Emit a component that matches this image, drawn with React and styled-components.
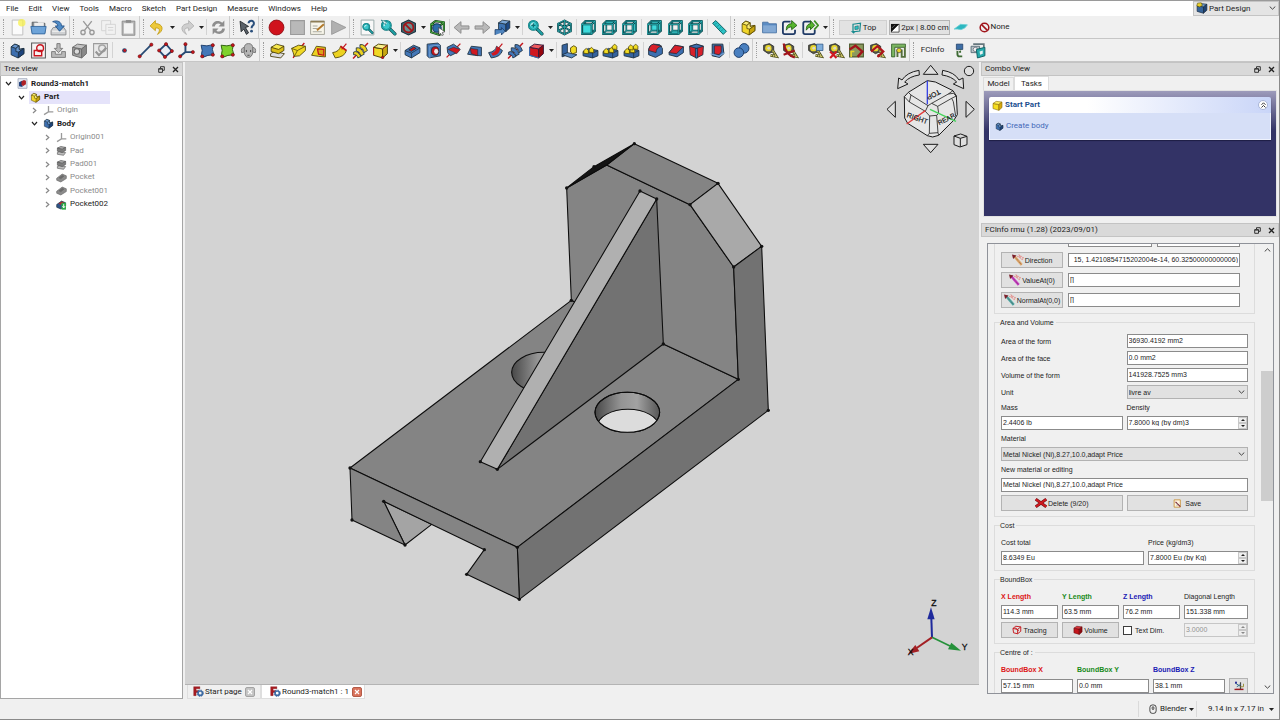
import React, { useLayoutEffect, useRef } from "react";
import styled, { createGlobalStyle, css } from "styled-components";

const ui = 'Roboto, "Noto Sans", sans-serif';
const form = '"Liberation Sans", Arial, sans-serif';

const Global = createGlobalStyle`
  *, *::before, *::after { box-sizing: border-box; }
  body { margin: 0; background: #f0f0f0; color: #1c1c1c; font: 8px/12px ${ui}; }
  button, input, select { font: inherit; color: inherit; margin: 0; padding: 0; border-radius: 0; }
  svg { display: block; flex: none; }
`;

/* ---------- drawing helpers ---------- */

const Glyph = ({ size = 17, children, box = 16 }) => (
  <svg width={size} height={size} viewBox={`0 0 ${box} ${box}`} aria-hidden="true">{children}</svg>
);

const D = "#1c2f3e";

const Cube = ({ f, t, s, line = D }) => (
  <g stroke={line} strokeWidth=".9" strokeLinejoin="round">
    <path d="M1.5 5 10 6.5V15L1.5 12.5Z" fill={f} />
    <path d="M1.5 5 6 2 14.5 3 10 6.5Z" fill={t} />
    <path d="M10 6.5 14.5 3V11L10 15Z" fill={s} />
  </g>
);

const Piped = ({ d, c, w = 1.4, k = "#0b3d42" }) => (
  <g fill="none" strokeLinejoin="round" strokeLinecap="round">
    <path d={d} stroke={k} strokeWidth={w + 1.1} />
    <path d={d} stroke={c} strokeWidth={w} />
  </g>
);

const faces = {
  front: "M2 5H11V14H2Z",
  top: "M2 5 5 2H14L11 5Z",
  right: "M11 5 14 2V11L11 14Z",
  rear: "M5 2H14V11H5Z",
  bottom: "M2 14 5 11H14L11 14Z",
  left: "M2 5 5 2V11L2 14Z",
};

const ViewCube = ({ face }) => {
  const back = face === "rear" || face === "bottom" || face === "left";
  return (
    <g>
      {back && <path d={faces[face]} fill="#3ddadc" />}
      <Piped w={0.5} c="#1f9ea2" k="#1b6a6e" d="M5 2V11H14M5 11 2 14" />
      {!back && <path d={faces[face]} fill="#3ddadc" />}
      <Piped w={0.8} c="#2bb9bd" d="M2 5H11V14H2ZM2 5 5 2H14L11 5M14 2V11L11 14" />
    </g>
  );
};

const Dot = ({ x, y, r = 1.5 }) => <circle cx={x} cy={y} r={r} fill="#c4161c" stroke="#5c0a0d" strokeWidth=".5" />;

const Lens = () => (
  <g>
    <Piped d="M9.5 9.5 14 14" c="#1f9fa3" w={2} />
    <circle cx="6" cy="6" r="4.2" fill="#3cc7cb" stroke="#0e6f74" strokeWidth="1.8" />
    <circle cx="6" cy="6" r="4.2" fill="none" stroke="#26b8bc" strokeWidth=".8" />
    <path d="M3.8 6.5Q4 4 6.5 3.8" fill="none" stroke="#d8f6f7" strokeWidth="1.2" />
  </g>
);

const Body = ({ a = "#3d6fb0", b = "#6a97cf", c = "#1d437c", line = D }) => (
  <g stroke={line} strokeWidth=".8" strokeLinejoin="round">
    <path d="M2 4.5 5.5 2 9.5 3.5V7L14 6V11L8.5 15 2 12Z" fill={a} />
    <path d="M2 4.5 5.5 2 9.5 3.5 6.5 6Z" fill={b} />
    <path d="M6.5 6 9.5 3.5V7L14 6 9 9.5 6.5 9Z" fill={b} />
    <path d="M9 9.5 14 6V11L8.5 15Z" fill={c} />
  </g>
);

const Bolt = ({ c, d }) => (
  <g>
    <path d="M1 15.5 15 1" stroke={d} strokeWidth="1.4" />
    <g fill={c} stroke={D} strokeWidth=".8" strokeLinejoin="round">
      <path d="M1.5 9.5Q5 7.5 8.5 13.5L5.5 15Q5 11.5 1.5 12Z" />
      <path d="M4 5.5Q9 4.500 11.5 11.5L8.500 13Q7 8.500 4 8.500Z" />
      <path d="M7.5 2.5Q12 1.5 14.5 8L11.5 10Q10.5 5.5 7.5 5.5Z" />
    </g>
  </g>
);

const Tape = ({ children }) => (
  <g>
    <path d="M1.5 3 7 1.5 11 4V9L6 11 1.5 8Z" fill="#55564a" stroke="#24251f" strokeWidth=".7" />
    <circle cx="6" cy="5.8" r="3" fill="#e8d52a" />
    <circle cx="6.4" cy="5.8" r="1.4" fill="#d9d9c6" />
    <path d="M10 8 13.5 13.5 8 12.5" fill="none" stroke="#4f501c" strokeWidth="2.6" />
    <path d="M10 8 13.5 13.5 8 12.5" fill="none" stroke="#cfc76a" strokeWidth="1.3" strokeDasharray="1.4 .7" />
    {children}
  </g>
);

const Pattern = ({ n }) => (
  <g>
    <path d="M1 9 6 6 15 8V13L10 15 1 13Z" fill="#35639f" stroke={D} strokeWidth=".8" />
    <path d="M1 9 10 10.5V15M10 10.5 15 8" fill="none" stroke={D} strokeWidth=".7" />
    {[[9, 7], [4, 8], [12, 4], [7.5, 4.5]].slice(0, n).map(([x, y]) => (
      <path key={x} d={`M${x - 2.3} ${y}V${y + 2.6}L${x + 2} ${y + 3}V${y}L${x} ${y - 2}Z`} fill="#f2dc23" stroke="#4b4106" strokeWidth=".7" />
    ))}
  </g>
);

const icons = {
  newDoc: <g><path d="M3 1H13V15H3Z" fill="#fbfbfb" stroke="#b9b9b9" strokeWidth=".8" /><circle cx="12" cy="3.5" r="3.5" fill="#f7f04a" opacity=".75" /></g>,
  open: <g><path d="M2 13V3H7L8 4H14V13Z" fill="#8a8f94" stroke="#4d5358" strokeWidth=".7" /><path d="M4 3.5H13V9H4Z" fill="#eee" /><path d="M.8 7H15.2L14 14H2Z" fill="#6ea4d9" stroke="#2f639b" strokeWidth=".8" /></g>,
  save: <g><path d="M3 8 1 11V15H15V11L13 8Z" fill="#cfd1d3" stroke="#84878a" strokeWidth=".8" /><path d="M2 11.5H14" stroke="#f5f5f5" /><path d="M2.5 2.5C7 .5 11 3 10.8 6.5H13.5L9 11.5 5 6.5H7.5C7 4.5 5 3 2.5 2.5Z" fill="#4f8bc6" stroke="#1f4e86" strokeWidth=".8" /></g>,
  cut: <g fill="none" stroke="#9a9a9a" strokeWidth="1.3"><path d="M4 2 11 11M12 2 5 11" /><circle cx="3.8" cy="12.6" r="2" /><circle cx="12.2" cy="12.6" r="2" /></g>,
  copy: <g fill="#f1f1f1" stroke="#d0d0d0" strokeWidth=".8"><path d="M1.5 1.5H10V11H1.5Z" /><path d="M5.5 5H14.5V14.5H5.5Z" /><path d="M7.5 8H12.5M7.5 10.5H12.5" /></g>,
  paste: <g><path d="M2 2H14V15.3H2Z" fill="#b8b8b8" stroke="#868686" strokeWidth=".8" /><path d="M3.7 4H12.3V13.7H3.7Z" fill="#f3f3f3" /><path d="M5.5 1H10.5V3.6H5.5Z" fill="#8d8d8d" /></g>,
  undo: <path d="M6 1.5 1 6.5 6 11V8.5C10 8 11 10.5 8 14.5 14.5 11 13.5 4.5 6 4.3Z" fill="#edc93a" stroke="#c29c14" strokeWidth=".8" />,
  redo: <path d="M10 1.5 15 6.5 10 11V8.5C6 8 5 10.5 8 14.5 1.5 11 2.5 4.5 10 4.3Z" fill="#cfcfcf" stroke="#b0b0b0" strokeWidth=".8" />,
  refresh: <g fill="#8e8e8e"><path d="M2 7C2 2 8 .5 11.5 3.5L13.5 1.5V7H8L10 5C7.5 3.2 5 4.5 4.5 7Z" /><path d="M14 9C14 14 8 15.5 4.5 12.5L2.5 14.5V9H8L6 11C8.5 12.8 11 11.5 11.5 9Z" /></g>,
  whats: <g><path d="M1 2 9 7 6 8 9 13 7 14.5 4.5 9.5 2 12Z" fill="#5a6169" stroke="#1e2226" strokeWidth=".8" /><path d="M9 4C9 .8 14.5 1 14 4.5 13.8 6.3 11.8 6.2 11.8 8.6" fill="none" stroke="#2a4f7c" strokeWidth="1.9" /><circle cx="11.8" cy="11.5" r="1.3" fill="#2a4f7c" /></g>,
  record: <circle cx="8" cy="8" r="7" fill="#d0121c" stroke="#8b0b12" strokeWidth=".8" />,
  stop: <path d="M1.5 1.5H14.5V14.5H1.5Z" fill="#b9b9b9" stroke="#9a9a9a" />,
  macro: <g><path d="M1.5 2H14.5V14.5H1.5Z" fill="#f7f5ea" stroke="#9a9a8f" strokeWidth=".8" /><path d="M1.5 2.5H14.5" stroke="#8d7d56" strokeWidth="1.6" /><path d="M3.5 6.5H8M3.5 9H8M3.5 12H12" stroke="#a9a9a0" /><path d="M14 5 7.5 10.5" stroke="#b1782a" strokeWidth="1.8" /></g>,
  play: <path d="M1.5 1.5 15 8 1.5 14.5Z" fill="#b0b0b0" stroke="#979797" strokeWidth=".8" />,
  fitAll: <g><path d="M2 1H14V15H2Z" fill="#f8f8f8" stroke="#9aa" strokeWidth=".9" /><g transform="translate(2.5 3) scale(.72)"><Lens /></g></g>,
  fitSel: <g><Lens /><path d="M1 1 6 2.5 5 5.5Z" fill="#e7f7f7" stroke="#0e6f74" strokeWidth=".6" /></g>,
  drawStyle: <g><path d="M8 1 14.5 4V12L8 15 1.5 12V4Z" fill="#3c6b70" stroke={D} /><circle cx="8" cy="8" r="4.6" fill="#6c8f90" stroke="#a01318" strokeWidth="1.7" /><path d="M4.8 4.8 11.2 11.2" stroke="#a01318" strokeWidth="1.7" /></g>,
  boxSel: <g><Piped w={0.9} c="#4fb547" k="#123b16" d="M2 5 10 6.5V15L2 12.5ZM2 5 6 2 14 3 10 6.5M14 3V11" /><circle cx="7.5" cy="8.5" r="4" fill="#2c6da8" stroke="#14365c" /><path d="M9 8 15 12 12.5 12.7 13.5 15 12 15.5 11 13.5 9.5 15Z" fill="#fff" stroke="#333" strokeWidth=".6" /></g>,
  back: <path d="M1 8 7.5 2.5V6.5H15V9.5H7.5V13.5Z" fill="#b9b9b9" stroke="#8c8c8c" strokeWidth=".9" />,
  forward: <path d="M15 8 8.5 2.5V6.5H1V9.5H8.5V13.5Z" fill="#b9b9b9" stroke="#8c8c8c" strokeWidth=".9" />,
  link: <g><g transform="translate(3 -.5) scale(.82)"><Cube f="#3e74b3" t="#7aa6d6" s="#1e4a86" /></g><path d="M1 15V10H7V8L10.5 11.5 7 15V13" fill="#4f86c0" stroke="#1b3c69" strokeWidth=".8" /></g>,
  zoomIn: <g><Lens /><path d="M6 4V8M4 6H8" stroke="#0e6f74" strokeWidth="1.1" /></g>,
  axo: <Piped w={0.8} c="#2aa9ad" d="M8 1.5 14 4.5V11.5L8 14.5 2 11.5V4.5ZM2 4.5 8 7.5 14 4.5M8 7.5V14.5M8 1.5V7.5M2 11.5 8 7.5 14 11.5" />,
  vFront: <ViewCube face="front" />, vTop: <ViewCube face="top" />, vRight: <ViewCube face="right" />,
  vRear: <ViewCube face="rear" />, vBottom: <ViewCube face="bottom" />, vLeft: <ViewCube face="left" />,
  ruler: <g><path d="M1.5 4 4.5 1.5 14.5 11.5 11.5 14.5Z" fill="#2cc4c7" stroke="#0e5f63" strokeWidth=".9" /><path d="M5 4 4 5M7 6 6 7M9 8 8 9M11 10 10 11" stroke="#0e5f63" strokeWidth=".7" /></g>,
  part: <Body a="#f1d62a" b="#f9ec72" c="#c7a50e" line="#5a4a06" />,
  folder: <g><path d="M1.5 13V3H6.5L7.5 4.5H14.5V13Z" fill="#5b8cc4" stroke="#466f9f" strokeWidth=".8" /><path d="M2 6H14V12.5H2Z" fill="#83a9d4" /></g>,
  linkMake: <g><path d="M9 2.5H3.5Q1.8 2.5 1.8 4.2V12.5Q1.8 14.2 3.5 14.2H11.5Q13.2 14.2 13.2 12.5V10" fill="none" stroke="#1f3a66" strokeWidth="1.7" /><path d="M5 10.5C5 6 7 4.5 10 4.5V1.5L15 6 10 10V7.5C8 7.5 6.5 8 5 10.5Z" fill="#56b52d" stroke="#1e5c10" strokeWidth=".8" /></g>,
  linkGroup: <g><path d="M8 2.5H2.8Q1.2 2.5 1.2 4.2V12.5Q1.2 14.2 2.8 14.2H10.5Q12 14.2 12 12.5V10" fill="none" stroke="#1f3a66" strokeWidth="1.7" /><path d="M4 10.5C4 6 6 4.5 8 4.5V1.5L12 6 8 10V7.5Q6 7.5 4 10.5Z" fill="#56b52d" stroke="#1e5c10" strokeWidth=".8" /><path d="M11.5 1.5 15.3 6 11.5 10" fill="none" stroke="#3d8f22" strokeWidth="1.6" /></g>,
  plane: <path d="M2 9.5 8 5 14.5 5.5 12 8.5 8.5 10 5 9.5Z" fill="#2db7c0" stroke="#6fd0d6" strokeWidth=".8" />,
  body: <Body />,
  sketch: <g><path d="M1.5 1H14.5V15H1.5Z" fill="#f6f2f2" stroke="#5a5a5a" /><path d="M4 8H11V13H4Z" fill="none" stroke="#c8141d" strokeWidth="1.3" /><circle cx="9.5" cy="5.8" r="3.2" fill="none" stroke="#c8141d" strokeWidth="1.3" /></g>,
  attach: <g fill="#b9b9b9" stroke="#7d7d7d" strokeWidth=".9"><path d="M1.5 9H5V11.5H11V9H14.5V14.5H1.5Z" /><path d="M6.5 1.5H9.5V6H12L8 10 4 6H6.5Z" /></g>,
  validate: <g><Cube f="#a2a2a2" t="#c4c4c4" s="#8a8a8a" line="#6c6c6c" /><circle cx="5.5" cy="9" r="2.6" fill="#dcdcdc" stroke="#6b6b6b" /></g>,
  check: <g><path d="M1.5 1.5H14.5V14.5H1.5Z" fill="#e9e9e9" stroke="#9c9c9c" /><circle cx="9.5" cy="6" r="3.2" fill="none" stroke="#a6a6a6" strokeWidth="1.3" /><path d="M3.5 9 6.5 12.5 13.5 5.5" fill="none" stroke="#969696" strokeWidth="2" /></g>,
  point: <g><circle cx="8" cy="8" r="2.2" fill="#28456f" /><circle cx="8.3" cy="8" r="1.3" fill="#c4161c" /></g>,
  line: <g><path d="M2.5 13.5 13.5 2.5" stroke="#274a73" strokeWidth="1.7" /><Dot x={2.5} y={13.5} /><Dot x={13.5} y={2.5} /></g>,
  datumPlane: <g><path d="M8.5 2 14 8.5 7.5 14 2 8Z" fill="#e9eef5" stroke="#274a73" strokeWidth="1.7" /><Dot x={8.5} y={2} /><Dot x={14} y={8.5} /><Dot x={7.5} y={14} /><Dot x={2} y={8} /></g>,
  cs: <g><path d="M7 2V9.5L2 13.5M7 9.5H14" fill="none" stroke="#274a73" strokeWidth="1.8" /><Dot x={7} y={2} /><Dot x={2} y={13.5} /><Dot x={14} y={9.5} /></g>,
  binder: <g><path d="M2 3Q7 4.5 13.5 2.5 11.5 7 14 12 8 12 3.5 14.5 1.5 12 3 8Z" fill="#4478b8" stroke="#1b3c69" strokeWidth=".9" /><Dot x={13} y={3} /><Dot x={13} y={12} /><Dot x={3} y={13.5} /></g>,
  subBinder: <g><path d="M2 3Q7 4.5 13.5 2.5 11.5 7 14 12 8 12 3.5 14.5 1.5 12 3 8Z" fill="#7fd22e" stroke="#2b5d0c" strokeWidth=".9" /><Dot x={13} y={3} /><Dot x={13} y={12} /><Dot x={3} y={13.5} /></g>,
  clone: <g fill="#b5b5b5" stroke="#777" strokeWidth=".9"><path d="M4 6Q4 1.5 8 1.5T12 6V10Q11 14.5 8 14.5T4 10Z" /><path d="M4 5Q.5 5.5 1.5 10L4 9.5ZM12 5Q15.5 5.5 14.5 10L12 9.5Z" /><path d="M6 7.5V9.5M10 7.5V9.5M7 12.5H9" stroke="#444" /></g>,
  pad: <g stroke="#453a06" strokeWidth=".8"><path d="M1.5 11 5 9 14.5 11 11 15 1.5 13.5Z" fill="#dcdce0" /><path d="M2 5V9L9 11 14 8V4Z" fill="#dcbf17" /><path d="M2 5 7 2 14 4 9 7Z" fill="#f8e94e" /></g>,
  revolve: <g><path d="M3 15 5 11M11 4 13.5 1" stroke="#c4161c" strokeWidth="1.3" /><path d="M1.5 6 8 3 14.5 4V8L9 13 4 13.5 3 10Z" fill="#f0d824" stroke="#4b4106" strokeWidth=".8" /><path d="M1.5 6 7 8 4 13.5M7 8 14.5 4" fill="none" stroke="#4b4106" strokeWidth=".7" /></g>,
  loft: <g><path d="M1.5 12.5 6 4 14.5 5V14L8 13.5Z" fill="#ecd21f" stroke="#4b4106" strokeWidth=".8" /><path d="M7 6.5 13 7V12.5L8 11.5Z" fill="#d9a417" stroke="#c4161c" strokeWidth="1.2" /></g>,
  sweep: <g><path d="M1.5 10Q8 9 9 4L14.5 8Q13 14 4 15Z" fill="#ecd21f" stroke="#4b4106" strokeWidth=".8" /><path d="M9 4 14.5 8" stroke="#c4161c" strokeWidth="1.5" /><path d="M10 7 14.5 1.5" stroke="#c4161c" strokeWidth="1.1" /></g>,
  helix: <Bolt c="#ecd21f" d="#c4161c" />,
  addPrim: <g><Cube f="#f0d824" t="#faf08a" s="#c9a812" line="#4b4106" /><path d="M1.5 5V12.5M10 6.5 14.5 3" stroke="#c4161c" strokeWidth=".8" /><Dot x={10} y={14.5} r={1.2} /></g>,
  pocket: <g><path d="M1 8 9 3 15 5.5V10L7 15 1 12Z" fill="#4478b8" stroke={D} strokeWidth=".8" /><path d="M1 8 7 10.5V15M7 10.5 15 5.5" fill="none" stroke={D} strokeWidth=".7" /><path d="M4.5 7.5 9 4.8 11.5 6 7 8.8Z" fill="#c4161c" stroke={D} strokeWidth=".7" /></g>,
  hole: <g><path d="M2 2 12 1 14.5 3V13L4 15 2 13Z" fill="#4478b8" stroke={D} strokeWidth=".8" /><path d="M4.5 4 14 3M4.5 4V15" stroke="#7aa6d6" strokeWidth=".8" /><ellipse cx="9.5" cy="8.5" rx="3.5" ry="4" fill="#c4161c" stroke={D} strokeWidth=".8" /><ellipse cx="10.5" cy="8.8" rx="1.9" ry="2.5" fill="#e8e8e8" /></g>,
  groove: <g><path d="M1.5 14.5 14.5 1.5" stroke="#c4161c" strokeWidth="1.2" /><path d="M2 5 8 2 13.5 6 11 10 5 13 2.5 10Z" fill="#4478b8" stroke={D} strokeWidth=".8" /><path d="M3 7 8 5 14.5 7 11 11 7 9Z" fill="#d01820" stroke={D} strokeWidth=".5" /></g>,
  subLoft: <g><path d="M1.5 11.5 5 4 14.5 5V13L8 12.5Z" fill="#4478b8" stroke={D} strokeWidth=".8" /><path d="M4 6 11 7V13L5 11Z" fill="#d01820" stroke={D} strokeWidth=".6" /></g>,
  subSweep: <g><path d="M1.5 10Q8 9 9 4L14.5 8Q13 14 4 15Z" fill="#4478b8" stroke={D} strokeWidth=".8" /><path d="M4 10.5Q9 9 9 4L12.5 6.5Q11 12 5.5 13Z" fill="#d01820" /><path d="M10 7 14.5 1.5" stroke="#c4161c" strokeWidth="1.1" /></g>,
  subHelix: <Bolt c="#4478b8" d="#c4161c" />,
  subPrim: <g><Cube f="#d01820" t="#ef5a5f" s="#98070d" line="#3b1a3a" /><path d="M1.5 5V12.5L10 15" fill="none" stroke="#3d6fb0" strokeWidth="1" /></g>,
  mirror: <g><path d="M1 3 6 1.5V12L1 14Z" fill="#35639f" stroke={D} strokeWidth=".8" /><path d="M1 12 6 10 15 12 10 15Z" fill="#5b8cc4" stroke={D} strokeWidth=".8" /><path d="M9 5.5 12 3.5 14.5 5V10L11 11 9 9.5Z" fill="#f2dc23" stroke="#4b4106" strokeWidth=".8" /></g>,
  linPat: <Pattern n={2} />, polPat: <Pattern n={3} />, multi: <Pattern n={4} />,
  fillet: <g><path d="M1.5 7Q2 3 6 2L12 2.5 14.5 6V11L8 14.5 1.5 12Z" fill="#3d6fb0" stroke={D} strokeWidth=".8" /><path d="M1.5 8Q2 3 6 2L14 4Q8.5 5 8.5 10Z" fill="#d8202a" stroke={D} strokeWidth=".7" /></g>,
  chamfer: <g><path d="M1 10 6.5 3 14.5 4.5V10L8.5 14 1 12Z" fill="#3d6fb0" stroke={D} strokeWidth=".8" /><path d="M1 10 6.5 3 14.5 4.5 8 11Z" fill="#d8202a" stroke={D} strokeWidth=".7" /></g>,
  draft: <g><path d="M1.5 4 8 2 14.5 4 14 12 8 15 2 12Z" fill="#d8202a" stroke={D} strokeWidth=".8" /><path d="M1.5 4 8 6 14.5 4 8 2ZM7 6H9V15H7Z" fill="#3d6fb0" stroke={D} strokeWidth=".7" /></g>,
  thick: <g><path d="M3 2H13L14 11 10 14.5 3 13Z" fill="#3d6fb0" stroke={D} strokeWidth=".9" /><path d="M5 3.5H11.5V9.5L9.5 12 5 11Z" fill="#d8202a" stroke={D} strokeWidth=".7" /><path d="M1.5 11 9.5 13.5 14.5 10" fill="none" stroke="#7aa6d6" /></g>,
  boolean: <g fill="#4a80c0" stroke="#1b3c69" strokeWidth=".9"><circle cx="10.5" cy="6" r="4.5" /><circle cx="5.5" cy="10" r="4.5" /></g>,
  mLin: <Tape />,
  mAng: <Tape><path d="M1.5 1.5Q4 13 12 14.5M1.5 12 12 8" fill="none" stroke="#a0141b" strokeWidth="2" /></Tape>,
  mRef: <Tape><path d="M9 2H15V8H9Z" fill="#7faedc" stroke="#2a5484" strokeWidth=".7" /></Tape>,
  mClr: <Tape><path d="M2 9 8 15M8 9 2 15" stroke="#d01820" strokeWidth="2" /></Tape>,
  mTog: <g><path d="M1.5 2H14.5V14H1.5Z" fill="#8b9a5e" stroke="#4c5a2e" /><path d="M3 14V9H6" fill="none" stroke="#e8d52a" strokeWidth="1.5" /><path d="M1.5 7 7 3.5 13.5 9 9 14" fill="none" stroke="#a0141b" strokeWidth="2.2" /></g>,
  mTog3: <Tape><path d="M2 9 8 4 13.5 9 8 14" fill="none" stroke="#b0141b" strokeWidth="2" /></Tape>,
  mDelta: <g><path d="M1.5 2H14.5V5H4.5V14H1.5Z" fill="#7bb661" stroke="#2f5b25" strokeWidth=".8" /><path d="M14 5V14H11V8H7V14" fill="none" stroke="#55703c" strokeWidth="1.8" /><circle cx="8.5" cy="8" r="2.2" fill="#e8d52a" stroke="#333" strokeWidth=".6" /></g>,
  fc1: <g><path d="M6 2H12V7H6Z" fill="#3e6ea5" stroke="#1d3d66" strokeWidth=".7" /><path d="M7 8V11.5Q7 13.5 9 13.5H11.5M9.5 7V10" fill="none" stroke="#3f6b34" strokeWidth="1.8" /><path d="M6 8H10" stroke="#ddd" /></g>,
  fc2: <g><path d="M1 4H9V10H1Z" fill="#b8c2c6" stroke="#4f6570" strokeWidth=".8" /><path d="M3 2H13V5" fill="none" stroke="#66777d" strokeWidth="1.6" /><circle cx="5" cy="7" r="2" fill="#f4f4f4" stroke="#556" strokeWidth=".6" /><path d="M6 7 14 5V13L7 15Z" fill="#26a9ab" stroke="#0e5f63" strokeWidth=".9" /><path d="M9 9 12 8V11L9.5 12Z" fill="#e7f3f3" /></g>,
  none: <g fill="none" stroke="#a0141b" strokeWidth="2.2"><circle cx="8" cy="8" r="6.3" /><path d="M3.8 3.8 12.2 12.2" /></g>,
  topView: <g><path d="M4 3 14 1.5 13 12 4 13Z" fill="none" stroke="#178a8e" strokeWidth="1.6" /><path d="M6.5 6 11 5V9.5L6.5 10Z" fill="#2cc4c7" stroke="#0e5f63" strokeWidth=".8" /><path d="M1 12 7 12.5 5 15.5" fill="#178a8e" /></g>,
  pen: <g><path d="M1.5 1.5H14.5V14.5H1.5Z" fill="#111" /><path d="M14.5 1.5V14.5H1.5Z" fill="#fff" stroke="#111" /><path d="M3 8 8 3" stroke="#888" /></g>,
  wb: <g><Cube f="#356398" t="#6f9bcb" s="#1f4270" line="#1a2a3e" /><path d="M2 1.5 7 1 8.5 4.5 4.5 6.5 1 5Z" fill="#e8cf2a" stroke="#4b4106" strokeWidth=".7" /></g>,
  doc: <g><path d="M1.5 1H14.5V15H1.5Z" fill="#e8ecf5" stroke="#8d97ab" /><path d="M3 6 8 3.5V13L3 12Z" fill="#1b3b78" /><path d="M6.5 5 10 3 13 4V9L9 11.5 6.5 10Z" fill="#b02226" /></g>,
  origin: <path d="M8 1.5V10L1.5 14M8 10H15" fill="none" stroke="#9a9a9a" strokeWidth="1.9" />,
  padGray: <g stroke="#555" strokeWidth=".9"><path d="M2 11 5 9.5 14 11 11 15 2 13.5Z" fill="#bdbdbd" /><path d="M2 4.5V9L9 11 14 8V3.5Z" fill="#7d7d7d" /><path d="M2 4.5 7 2 14 3.5 9 6Z" fill="#a8a8a8" /></g>,
  pocketGray: <g stroke="#666" strokeWidth=".9"><path d="M1 9 9 3 15 5.5V9.5L7 14.5 1 12Z" fill="#8b8b8b" /><path d="M4.5 8.5 9 5 11.5 6 7 9.8Z" fill="#6b6b6b" /></g>,
  pocketTip: <g><path d="M1 8 8 3 14 5.5V10L7 14.5 1 12Z" fill="#2f5488" stroke={D} strokeWidth=".9" /><path d="M3.5 7 8 3.5 12 5 7 8.5Z" fill="#b5262c" /><path d="M8 5.5H14.5V15.5H8Z" fill="#2fa84a" /><path d="M11.2 7.5V12M9.5 10.5 11.2 13 13 10.5" fill="none" stroke="#fff" strokeWidth="1.4" /></g>,
  fcLogo: <g><path d="M1 1H10V4H4.5V6.5H8V9.5H4.5V14H1Z" fill="#a81c22" stroke="#7a1015" strokeWidth=".5" /><circle cx="10.5" cy="10.5" r="3.2" fill="none" stroke="#3c6ba5" strokeWidth="2.4" /><circle cx="10.5" cy="10.5" r="4.7" fill="none" stroke="#2f5b92" strokeWidth="1.2" strokeDasharray="2 1.69" /></g>,
  yellowBox: <Cube f="#f5dd20" t="#fff05a" s="#d9a90c" line="#8a6d05" />,
  mouse: <g fill="none" stroke="#222" strokeWidth="1.3"><rect x="3" y="1.5" width="10" height="13.5" rx="4" /><rect x="6.7" y="4.3" width="2.6" height="4.5" rx="1.3" /></g>,
  del: <g><path d="M1 3 15 13M15 3 1 13" stroke="#6b1013" strokeWidth="4" /><path d="M1 3 15 13M15 3 1 13" stroke="#d01a20" strokeWidth="2.6" /></g>,
  savePen: <g><path d="M2 1.5H13V14.5H2Z" fill="#fff5e2" stroke="#c9933d" strokeWidth="1.6" /><path d="M4.5 5 13 13.5" stroke="#7b2030" strokeWidth="2" /><path d="M5 8H8M5 11H9" stroke="#999" /></g>,
  trace: <g fill="none" stroke="#c4161c" strokeWidth="1.5"><path d="M1.5 5.5 9 7V14L2.5 12.5ZM1.5 5.5 6 2 14 3 9 7M14 3V10L9 14" /><path d="M5 4.5 11 9" /></g>,
  volume: <Cube f="#c4161c" t="#d9363c" s="#8d0b10" line="#6b070b" />,
  axes: <g><path d="M2 12.5H14" stroke="#9b1b20" strokeWidth="2" /><path d="M10 12V3" stroke="#444" strokeWidth="1.6" /><path d="M3 4 9 8M5 9 10 6" stroke="#2c6b8a" strokeWidth="1.3" /><path d="M10 9H14V5" fill="none" stroke="#98903a" strokeWidth="1.3" /><circle cx="4" cy="3.5" r="1.4" fill="#2b2f9a" /></g>,
};

const vec = (c) => (
  <g><path d="M3 3 13 14.5" stroke={c} strokeWidth="3.4" /><path d="M3 3 13 14.5" stroke="#6b3440" strokeWidth=".8" strokeDasharray="1.5 1" /><path d="M0 .5 6 2 1.5 6.5Z" fill="#7b1f2a" /><path d="M7 3 11 5 10 2 15 5 13 8" fill="none" stroke="#e3938f" strokeWidth="1.7" strokeDasharray="2 1" /></g>
);
icons.direction = vec("#e0aa6a");
icons.value = vec("#c43cc4");
icons.normal = vec("#4aa9a4");

const Icon = ({ name, size }) => <Glyph size={size}>{icons[name]}</Glyph>;

/* ---------- frame ---------- */

const Window = styled.div`
  height: 100vh; display: flex; flex-direction: column; overflow: hidden;
  border-right: 1px solid #8a8a8a; border-bottom: 1px solid #8a8a8a;
`;
const MenuBar = styled.header`
  height: 16px; flex: none; display: flex; align-items: stretch; background: #fff; border-top: 1px solid #9a9a9a;
`;
const Menus = styled.nav`display: flex; align-items: center; gap: 10px; padding-left: 6px; flex: 1;`;
const MenuLink = styled.a`color: #1c1c1c; text-decoration: none; font-size: 8px; line-height: 12px; white-space: nowrap;`;
const Workbench = styled.label`
  position: relative; display: flex; width: 86px;
  svg { position: absolute; left: 3px; top: 1px; pointer-events: none; }
  select + svg { left: auto; right: 3px; top: 5px; }
`;
const WorkbenchSelect = styled.select`
  appearance: none; width: 100%; border: 1px solid #c4c4c4; background: #e4e4e4; padding: 0 12px 0 15px; font-size: 8px; outline: none;
`;
const Toolbar = styled.div`
  height: 23px; flex: none; display: flex; align-items: stretch; border-bottom: 1px solid #c6c6c6; background: #f0f0f0;
`;
const Group = styled.div`display: flex; align-items: stretch; flex: none; width: ${(p) => p.$w}px;`;
const Tool = styled.button`
  flex: 1 1 0; min-width: 0; border: 0; background: none; display: flex; align-items: center; justify-content: center;
`;
const Handle = styled.span`
  flex: none; width: ${(p) => p.$w || 8}px; padding: 3px 0 3px 3px; border-left: ${(p) => (p.$first ? 0 : 1)}px solid #cdcdcd;
  &::before { content: ""; display: block; height: 100%; border-left: 1px dotted #9d9d9d; }
`;
const Split = styled.span`flex: none; width: ${(p) => p.$w || 3}px; padding: 3px 1px; &::before { content: ""; display: block; height: 100%; border-left: 1px solid #d3d3d3; }`;
const CaretBtn = styled.button`flex: none; width: 8px; border: 0; background: none; display: flex; align-items: center; justify-content: center;`;
const Caret = () => <svg width="5" height="3" viewBox="0 0 5 3" aria-hidden="true"><path d="M0 0H5L2.5 3Z" fill="#222" /></svg>;
const PlainTool = styled.button`
  flex: none; width: ${(p) => p.$w}px; border: 0; background: none; font-size: 8px; display: flex; align-items: center; justify-content: center; gap: 1px; white-space: nowrap;
`;
const ToggleTool = styled(PlainTool)`
  border: 1px solid ${(p) => (p.$flat ? "#d0d0d0" : "#b4b4b4")}; background: #e2e2e2; margin: 4px 0 3px 2px;
`;

const Work = styled.main`flex: 1; min-height: 0; display: grid; grid-template-columns: 183px minmax(0, 1fr) 298px; column-gap: 2px;`;
const Dock = styled.section`min-height: 0; display: flex; flex-direction: column; flex: ${(p) => (p.$grow ? "1" : "none")};`;
const DockHead = styled.header`
  height: 14px; flex: none; display: flex; align-items: center; gap: 6px; padding: 0 3px; background: #d9d9d9; border: 1px solid #c3c3c3;
`;
const DockTitle = styled.h2`margin: 0; flex: 1; font-size: 8px; line-height: 12px; font-weight: 400;`;
const DockBtn = styled.button`border: 0; background: none; width: 8px; height: 8px; display: grid; place-items: center;`;

const DockBar = ({ title }) => (
  <DockHead>
    <DockTitle>{title}</DockTitle>
    <DockBtn aria-label="Float"><svg width="7" height="7" viewBox="0 0 7 7"><path d="M2.5 2V.7H6.3V4.3H5M.7 2.7H4.5V6.3H.7ZM.7 3H4.5" fill="none" stroke="#222" strokeWidth=".9" /></svg></DockBtn>
    <DockBtn aria-label="Close"><svg width="7" height="7" viewBox="0 0 7 7"><path d="M1 1 6 6M6 1 1 6" stroke="#222" strokeWidth="1.3" /></svg></DockBtn>
  </DockHead>
);

/* ---------- tree ---------- */

const TreeBox = styled.div`flex: 1; background: #fff; border: 1px solid #a5a5a5; border-top: 0;`;
const TreeList = styled.ul`list-style: none; margin: 0; padding: 1px 0 0; height: 135px; display: grid; grid-auto-rows: minmax(0, 1fr);`;
const TreeRow = styled.li`display: flex; align-items: center; padding-left: ${(p) => 2 + p.$depth * 13}px;`;
const Twist = styled.button`border: 0; background: none; width: 10px; height: 10px; display: grid; place-items: center; margin-right: 3px;`;
const TreeName = styled.span`
  display: flex; align-items: center; gap: 3px; height: 13px; padding-left: 1px; font-size: 8px; white-space: nowrap;
  ${(p) => p.$bold && css`font-weight: 700;`}
  ${(p) => p.$dim && css`color: #8b8b8b;`}
  ${(p) => p.$sel && css`background: #e5e3fa; width: 81px;`}
`;
const treeRows = [
  { n: "Round3-match1", i: "doc", d: 0, open: true, bold: true },
  { n: "Part", i: "part", d: 1, open: true, bold: true, sel: true },
  { n: "Origin", i: "origin", d: 2, dim: true },
  { n: "Body", i: "body", d: 2, open: true, bold: true },
  { n: "Origin001", i: "origin", d: 3, dim: true },
  { n: "Pad", i: "padGray", d: 3, dim: true },
  { n: "Pad001", i: "padGray", d: 3, dim: true },
  { n: "Pocket", i: "pocketGray", d: 3, dim: true },
  { n: "Pocket001", i: "pocketGray", d: 3, dim: true },
  { n: "Pocket002", i: "pocketTip", d: 3 },
];

/* ---------- 3D view ---------- */

const Center = styled.section`min-width: 0; min-height: 0; display: flex; flex-direction: column;`;
const Canvas = styled.div`flex: 1; min-height: 0; background: #d3d3d3; svg { width: 100%; height: 100%; }`;
const DocTabs = styled.div`height: 15px; flex: none; display: flex; align-items: stretch; border-top: 1px solid #b4b4b4; padding-left: 2px;`;
const DocTab = styled.div`
  display: flex; align-items: center; gap: 3px; width: ${(p) => p.$w}px; padding-left: ${(p) => (p.$on ? 8 : 5)}px; border: 1px solid #dedede; border-top: 0;
  background: ${(p) => (p.$on ? "#fff" : "#f0f0f0")};
`;
const DocName = styled.button`border: 0; background: none; font-size: 8px; line-height: 12px; white-space: nowrap; display: flex; align-items: center; gap: 1px;`;
const DocClose = styled.button`
  width: 10px; height: 10px; border: 1px solid ${(p) => (p.$on ? "#b45b48" : "#a3a3a3")}; border-radius: 2px; background: ${(p) => (p.$on ? "#d9735c" : "#c4c4c4")};
  display: grid; place-items: center;
`;

const dots = [[883, 41], [1134, 160], [1265, 349], [1285, 841], [538, 1408], [532, 1252], [30, 1014], [36, 1170], [195, 1245], [131, 1114], [433, 1259], [380, 1333], [1050, 224], [1181, 411], [1195, 748], [970, 642], [694, 511], [680, 174], [762, 110], [900, 183], [950, 207], [421, 995], [472, 1018]];

const Scene = () => (
  <svg viewBox="185 62 794 622" preserveAspectRatio="xMidYMid meet" role="img" aria-label="3D view of the bracket">
    <defs>
      <linearGradient id="bore"><stop offset="0" stopColor="#484848" /><stop offset=".4" stopColor="#949494" /><stop offset=".65" stopColor="#a2a2a2" /><stop offset="1" stopColor="#565656" /></linearGradient>
      <clipPath id="holeClip"><ellipse cx="862" cy="847" rx="97" ry="60" /></clipPath>
    </defs>
    <g transform="translate(340 130) scale(.33333)" stroke="#0c0c0c" strokeWidth="3.2" strokeLinejoin="round">
      <path d="M30 1014 694 511 970 642 1195 748 532 1252Z" fill="#848484" />
      <path d="M680 174 800 105 1050 224 1181 411 1195 748 970 642 694 511Z" fill="#848484" />
      <path d="M883 41 1134 160 1050 224 800 105Z" fill="#848484" />
      <path d="M883 41 762 110 680 174 800 105Z" fill="#141414" />
      <path d="M1134 160 1265 349 1181 411 1050 224Z" fill="#a9a9a9" />
      <path d="M1181 411 1265 349 1285 841 538 1408 532 1252 1195 748Z" fill="#727272" />
      <path d="M131 1114 275 1183 195 1245Z" fill="#a4a4a4" />
      <path d="M30 1014 532 1252 538 1408 380 1333 433 1259 131 1114 195 1245 36 1170Z" fill="#848484" />
      <ellipse cx="612" cy="727" rx="97" ry="60" fill="url(#bore)" />
      <ellipse cx="862" cy="847" rx="97" ry="60" fill="url(#bore)" />
      <ellipse cx="864" cy="890" rx="92" ry="52" fill="#dcdcdc" clipPath="url(#holeClip)" />
      <ellipse cx="862" cy="847" rx="97" ry="60" fill="none" />
      <path d="M950 207 970 642 472 1018Z" fill="#727272" />
      <path d="M900 183 950 207 472 1018 421 995Z" fill="#b0b0b0" />
      <g stroke="none" fill="#111">{dots.map(([x, y]) => <circle key={`${x}-${y}`} cx={x} cy={y} r="5" />)}</g>
    </g>
    <g transform="translate(870 60) scale(.33333)" fill="none" stroke="#1a1a1a" strokeWidth="3" strokeLinejoin="round">
      <g fill="#dedede">
        <path d="M182 16 204 43H160Z" /><path d="M182 278 204 253H160Z" /><path d="M51 148 76 124V172Z" /><path d="M313 148 288 124V172Z" />
        <path d="M147 31Q111 37 96 60L86 54 83 86 114 72 104 66Q119 49 148 45Z" />
        <path d="M218 31Q254 37 267 60L279 54 281 86 250 72 260 66Q245 49 216 45Z" />
        <circle cx="297" cy="33" r="14" />
        <path d="M252 228 272 222 291 229V254L270 261 252 254ZM252 228 271 235 291 229M271 235V260" />
      </g>
      <path d="M172 62 196 66 249 92 259 108 262 164 252 180 206 226 188 231 172 227 113 190 104 174 103 110 115 97Z" fill="#e6e6e6" />
      <g strokeWidth="2.4">
        <path d="M115 97 123 105 118 126 103 110M123 105 174 137 185 130 235 102 249 92M118 126 166 154 174 137M185 130 203 139 206 160M235 102 250 100 259 108M203 139 245 115 259 108M245 115 250 125M166 154 179 168 200 166 206 160M179 168 178 220 172 227M200 166 204 218 206 226M178 220 204 218M250 125 257 168" />
      </g>
      <path d="M172 62V133" stroke="#3a45e6" strokeWidth="4" /><path d="M166 152 110 192" stroke="#e23b3b" strokeWidth="4" /><path d="M180 148 258 184" stroke="#45d35a" strokeWidth="4" />
      <g fill="#111" stroke="#111" strokeWidth=".5" fontFamily="Liberation Sans, Arial, sans-serif" fontSize="21">
        <text transform="translate(109 171) rotate(19)">RIGHT</text>
        <text transform="translate(208 196) rotate(-27)" fontSize="20">REAR</text>
        <text transform="translate(206 88) rotate(152)" fontSize="21">TOP</text>
      </g>
    </g>
    <g transform="translate(890 590) scale(.33333)">
      <path d="M126 142 124 84" stroke="#1f2a9c" strokeWidth="6" /><path d="M123 52 134 88H112Z" fill="#1f2a9c" />
      <path d="M126 142 180 168" stroke="#25913a" strokeWidth="5" /><path d="M213 182 174 178 184 158Z" fill="#25913a" />
      <path d="M126 142 80 174" stroke="#a32024" strokeWidth="6" /><path d="M54 192 76 165 88 184Z" fill="#a32024" />
      <g fontFamily="Liberation Sans, Arial, sans-serif" fontSize="26" fill="#0c0c0c" stroke="#0c0c0c" strokeWidth=".8"><text x="124" y="47">Z</text><text x="215" y="181">Y</text><text x="53" y="194">X</text></g>
    </g>
  </svg>
);

/* ---------- right side ---------- */

const Right = styled.aside`min-height: 0; display: flex; flex-direction: column; padding-bottom: 5px;`;
const PanelTabs = styled.div`display: flex; align-items: flex-end; height: 14px; padding: 0 2px;`;
const PanelTab = styled.button`
  border: 1px solid #dcdcdc; border-bottom: 0; font-size: 8px; line-height: 12px; width: ${(p) => (p.$on ? 35 : 31)}px; height: ${(p) => (p.$on ? 14 : 13)}px; background: ${(p) => (p.$on ? "#fff" : "#f0f0f0")};
`;
const TaskArea = styled.div`
  margin: 0 2px 6px; height: 127px; padding: 6px 5px; border: 1px solid #e2e2e2; background: linear-gradient(#9d9bbb, #333366 32%);
`;
const TaskCard = styled.section`box-shadow: 0 1px 1px #1d1d44; border-radius: 2px 2px 0 0; overflow: hidden;`;
const TaskHead = styled.header`
  height: 16px; display: flex; align-items: center; gap: 2px; padding: 0 3px; background: linear-gradient(90deg, #fff 35%, #c9d5f8);
`;
const TaskTitle = styled.h3`margin: 0; flex: 1; font-size: 8px; line-height: 12px; color: #21508f; font-weight: 700;`;
const Fold = styled.button`width: 10px; height: 10px; border: 1px solid #a9b5d6; border-radius: 50%; background: #fff; display: grid; place-items: center;`;
const TaskBody = styled.div`height: 27px; padding-left: 5px; display: flex; align-items: center; background: #d6dff7; border: 1px solid #eef2fd; border-top: 0;`;
const TaskLink = styled.a`display: flex; align-items: center; gap: 2px; color: #4469b8; text-decoration: none; font-size: 8px; line-height: 12px;`;

const Frame = styled.div`
  flex: 1; min-height: 0; margin: 6px 5px 0 6px; display: flex; border: 1px solid #8f9299; overflow: hidden; font: 7px/11px ${form};
`;
const Scroller = styled.div`flex: 1; min-width: 0; overflow: hidden; padding: 0 6px 12px;`;
const Bar = styled.div`
  width: 12px; flex: none; display: grid; grid-template-rows: 12px 115fr 130fr 180fr 12px; justify-items: center; align-items: center;
  &::after { content: ""; grid-row: 3; grid-column: 1; justify-self: stretch; align-self: stretch; background: #cdcdcd; }
  svg:last-of-type { grid-row: 5; }
`;
const Box = styled.fieldset`
  min-width: 0; margin: 0 0 3px; border: 1px solid #dcdcdc; padding: 6px ${(p) => (p.$wide ? 14 : 6)}px 5px 6px;
`;
const Legend = styled.legend`padding: 0 2px 0 0; margin-left: -1px; height: 11px; line-height: 11px;`;
const Rows = styled.div`display: grid; gap: ${(p) => p.$gap || 3}px;`;
const Row = styled.div`
  display: grid; grid-template-columns: ${(p) => p.$cols}; column-gap: ${(p) => p.$gap || 4}px; align-items: center;
  ${(p) => p.$tall && css`height: 16px;`}
`;
const Lab = styled.label`
  height: 11px; line-height: 11px; white-space: nowrap; ${(p) => p.$c && css`color: ${p.$c}; font-weight: 700;`}
`;
const Input = styled.input`
  width: 100%; min-width: 0; height: 14px; line-height: 10px; border: 1px solid #8b8b8b; background: #fff; padding: 0 1px 1px; outline: none;
  ${(p) => p.$end && css`text-align: right;`}
  &:disabled { background: #f0f0f0; color: #929292; border-color: #c6c6c6; }
`;
const SelWrap = styled.span`position: relative; display: flex; svg { position: absolute; right: 3px; top: 5px; pointer-events: none; }`;
const Sel = styled.select`appearance: none; width: 100%; height: 14px; border: 1px solid #b2b2b2; background: #e1e1e1; padding: 0 12px 0 1px; outline: none;`;
const SpinWrap = styled.span`position: relative; display: flex;`;
const SpinBtns = styled.span`
  position: absolute; right: 1px; top: 1px; bottom: 1px; width: 9px; display: grid; grid-template-rows: 1fr 1fr;
  button { border: 1px solid #c8c8c8; background: #eee; display: grid; place-items: center; min-height: 0; }
`;
const Btn = styled.button`
  height: 16px; min-width: 0; border: 1px solid #b3b3b3; background: #e1e1e1; display: flex; align-items: center; justify-content: center; gap: 1px; white-space: nowrap;
`;
const TickLabel = styled.label`display: flex; align-items: center; gap: 3px; white-space: nowrap;`;
const Tick = styled.input`appearance: none; width: 9px; height: 9px; border: 1px solid #3c3c3c; background: #fff; flex: none;`;

const Chevron = ({ up }) => <svg width="7" height="4" viewBox="0 0 7 4" aria-hidden="true"><path d={up ? "M.7 3.5 3.5 .8 6.3 3.5" : "M.7 .5 3.5 3.2 6.3 .5"} fill="none" stroke="#444" strokeWidth="1" /></svg>;
const Tri = ({ up, dim }) => <svg width="4" height="2" viewBox="0 0 4 2" aria-hidden="true"><path d={up ? "M0 2H4L2 0Z" : "M0 0H4L2 2Z"} fill={dim ? "#888" : "#222"} /></svg>;

const Spin = ({ id, value, off }) => (
  <SpinWrap>
    <Input id={id} defaultValue={value} disabled={off} aria-label={id} />
    <SpinBtns>
      <button aria-label="Increase" disabled={off}><Tri up dim={off} /></button>
      <button aria-label="Decrease" disabled={off}><Tri dim={off} /></button>
    </SpinBtns>
  </SpinWrap>
);
const Choice = ({ id, value }) => (
  <SelWrap><Sel id={id}><option>{value}</option></Sel><Chevron /></SelWrap>
);

const RED = "#dc1414", GREEN = "#178a17", BLUE = "#1a1ab4";

const Info = () => {
  const ref = useRef(null);
  useLayoutEffect(() => { ref.current.scrollTop = 19; }, []);
  return (
    <Frame>
      <Scroller ref={ref}>
        <Box $wide aria-label="Position">
          <Rows $gap={4}>
            <Row $cols="62px 1fr 1fr" $gap={5} $tall>
              <span /><Input aria-label="Base" /><Input aria-label="Axis" />
            </Row>
            {[["Direction", "direction", "15, 1.4210854715202004e-14, 60.32500000000006)"], ["ValueAt(0)", "value", "[]"], ["NormalAt(0,0)", "normal", "[]"]].map(([t, i, v]) => (
              <Row key={t} $cols="62px 1fr" $gap={5}>
                <Btn><Icon name={i} size={12} />{t}</Btn>
                <Input aria-label={t} defaultValue={v} $end={v.length > 20} />
              </Row>
            ))}
          </Rows>
        </Box>
        <Box>
          <Legend>Area and Volume</Legend>
          <Rows>
            {[["Area of the form", "36930.4192 mm2"], ["Area of the face", "0.0 mm2"], ["Volume of the form", "141928.7525 mm3"]].map(([t, v]) => (
              <Row key={t} $cols="1fr 1fr"><Lab htmlFor={t}>{t}</Lab><Input id={t} defaultValue={v} /></Row>
            ))}
            <Row $cols="1fr 1fr"><Lab htmlFor="unit">Unit</Lab><Choice id="unit" value="livre av" /></Row>
            <Row $cols="1fr 1fr"><Lab htmlFor="mass">Mass</Lab><Lab htmlFor="density">Density</Lab></Row>
            <Row $cols="1fr 1fr"><Input id="mass" defaultValue="2.4406 lb" /><Spin id="density" value="7.8000 kg (by dm)3" /></Row>
            <Lab htmlFor="material">Material</Lab>
            <Choice id="material" value="Metal Nickel (Ni),8.27,10.0,adapt Price" />
            <Lab htmlFor="newmat">New material or editing</Lab>
            <Input id="newmat" defaultValue="Metal Nickel (Ni),8.27,10.0,adapt Price" />
            <Row $cols="1fr 1fr"><Btn><Icon name="del" size={12} />Delete (9/20)</Btn><Btn><Icon name="savePen" size={9} />&nbsp;Save</Btn></Row>
          </Rows>
        </Box>
        <Box>
          <Legend>Cost</Legend>
          <Rows>
            <Row $cols="1fr 100px"><Lab htmlFor="cost">Cost total</Lab><Lab htmlFor="price">Price (kg/dm3)</Lab></Row>
            <Row $cols="1fr 100px"><Input id="cost" defaultValue="8.6349 Eu" /><Spin id="price" value="7.8000 Eu (by Kg)" /></Row>
          </Rows>
        </Box>
        <Box>
          <Legend>BoundBox</Legend>
          <Rows>
            <Row $cols="57px 57px 57px 1fr">
              <Lab htmlFor="xl" $c={RED}>X Length</Lab><Lab htmlFor="yl" $c={GREEN}>Y Length</Lab><Lab htmlFor="zl" $c={BLUE}>Z Length</Lab><Lab htmlFor="dl">Diagonal Length</Lab>
            </Row>
            <Row $cols="57px 57px 57px 1fr">
              <Input id="xl" defaultValue="114.3 mm" /><Input id="yl" defaultValue="63.5 mm" /><Input id="zl" defaultValue="76.2 mm" /><Input id="dl" defaultValue="151.338 mm" />
            </Row>
            <Row $cols="57px 57px 57px 1fr">
              <Btn><Icon name="trace" size={10} />Tracing</Btn><Btn><Icon name="volume" size={10} />Volume</Btn>
              <TickLabel><Tick type="checkbox" />Text Dim.</TickLabel><Spin id="textdim" value="3.0000" off />
            </Row>
          </Rows>
        </Box>
        <Box>
          <Legend>Centre of :</Legend>
          <Rows>
            <Row $cols="72px 72px 72px 1fr"><Lab htmlFor="bx" $c={RED}>BoundBox X</Lab><Lab htmlFor="by" $c={GREEN}>BoundBox Y</Lab><Lab htmlFor="bz" $c={BLUE}>BoundBox Z</Lab></Row>
            <Row $cols="72px 72px 72px 1fr">
              <Input id="bx" defaultValue="57.15 mm" /><Input id="by" defaultValue="0.0 mm" /><Input id="bz" defaultValue="38.1 mm" />
              <Btn aria-label="Create axes"><Icon name="axes" size={12} /></Btn>
            </Row>
          </Rows>
        </Box>
      </Scroller>
      <Bar><Chevron up /><Chevron /></Bar>
    </Frame>
  );
};

const Status = styled.footer`height: 20px; flex: none; display: flex; justify-content: flex-end; align-items: center; font-size: 8px;`;
const StatusBtn = styled.button`
  height: 16px; border: 0; border-left: 1px solid #dadada; background: none; display: flex; align-items: center; gap: 2px; white-space: nowrap;
  width: ${(p) => p.$w}px; padding: 0 5px 0 ${(p) => p.$pl}px;
  svg:last-child { margin-left: auto; }
`;

const G = ({ w, names }) => (
  <Group $w={w}>{names.split(" ").map((n) => <Tool key={n} aria-label={n}><Icon name={n} /></Tool>)}</Group>
);
const More = () => <CaretBtn aria-label="More"><Caret /></CaretBtn>;

export default function App() {
  return (
    <Window>
      <Global />
      <MenuBar>
        <Menus>
          {["File", "Edit", "View", "Tools", "Macro", "Sketch", "Part Design", "Measure", "Windows", "Help"].map((m) => <MenuLink key={m} href="#">{m}</MenuLink>)}
        </Menus>
        <Workbench>
          <Icon name="wb" size={12} />
          <WorkbenchSelect aria-label="Workbench"><option>Part Design</option></WorkbenchSelect>
          <Chevron />
        </Workbench>
      </MenuBar>
      <Toolbar>
        <Handle $first $w={7} /><G w={62} names="newDoc open save" />
        <Handle /><G w={62} names="cut copy paste" />
        <Handle /><G w={21} names="undo" /><More /><G w={21} names="redo" /><More /><Split /><G w={21} names="refresh" />
        <Handle /><G w={21} names="whats" />
        <Handle /><G w={83} names="record stop macro play" />
        <Handle /><G w={62} names="fitAll fitSel drawStyle" /><More /><G w={21} names="boxSel" /><Split />
        <G w={62} names="back forward link" /><More /><Split $w={4} /><G w={21} names="zoomIn" /><More /><G w={21} names="axo" /><Split />
        <G w={62} names="vFront vTop vRight" /><Split $w={4} /><G w={62} names="vRear vBottom vLeft" /><Split /><G w={21} names="ruler" />
        <Handle /><G w={83} names="part folder linkMake linkGroup" /><More />
        <Handle />
        <ToggleTool $w={48} $flat><Icon name="topView" size={12} />Top</ToggleTool>
        <ToggleTool $w={61}><Icon name="pen" size={10} />2px | 8.00 cm</ToggleTool>
        <G w={21} names="plane" />
        <PlainTool $w={46}><Icon name="none" size={11} />None</PlainTool>
      </Toolbar>
      <Toolbar>
        <Handle $first $w={7} /><G w={104} names="body sketch attach validate check" /><Split /><G w={145} names="point line datumPlane cs binder subBinder clone" />
        <Handle /><G w={124} names="pad revolve loft sweep helix addPrim" /><More /><Split /><G w={145} names="pocket hole groove subLoft subSweep subHelix subPrim" /><More /><Split $w={4} />
        <G w={83} names="mirror linPat polPat multi" /><Split /><G w={83} names="fillet chamfer draft thick" /><Split /><G w={21} names="boolean" />
        <Handle /><G w={41} names="mLin mAng" /><Split $w={4} /><G w={104} names="mRef mClr mTog mTog3 mDelta" />
        <Handle /><PlainTool $w={31}>FCInfo</PlainTool><G w={41} names="fc1 fc2" />
      </Toolbar>
      <Work>
        <Dock>
          <DockBar title="Tree view" />
          <TreeBox>
            <TreeList>
              {treeRows.map((r) => (
                <TreeRow key={r.n} $depth={r.d}>
                  <Twist aria-label="Toggle">
                    <svg width="7" height="7" viewBox="0 0 7 7"><path d={r.open ? "M1 2 3.5 4.8 6 2" : "M2 1 4.8 3.5 2 6"} fill="none" stroke={r.open ? "#222" : "#888"} strokeWidth="1.2" /></svg>
                  </Twist>
                  <TreeName $bold={r.bold} $dim={r.dim} $sel={r.sel}><Icon name={r.i} size={11} />{r.n}</TreeName>
                </TreeRow>
              ))}
            </TreeList>
          </TreeBox>
        </Dock>
        <Center>
          <Canvas><Scene /></Canvas>
          <DocTabs>
            {[["Start page", 74], ["Round3-match1 : 1", 104, true]].map(([t, w, on]) => (
              <DocTab key={t} $w={w} $on={on}>
                <DocName><Icon name="fcLogo" size={11} />{t}</DocName>
                <DocClose $on={on} aria-label="Close tab"><svg width="6" height="6" viewBox="0 0 6 6"><path d="M1 1 5 5M5 1 1 5" stroke="#fff" strokeWidth="1.2" /></svg></DocClose>
              </DocTab>
            ))}
          </DocTabs>
        </Center>
        <Right>
          <Dock>
            <DockBar title="Combo View" />
            <PanelTabs><PanelTab>Model</PanelTab><PanelTab $on>Tasks</PanelTab></PanelTabs>
            <TaskArea>
              <TaskCard>
                <TaskHead>
                  <Icon name="yellowBox" size={11} /><TaskTitle>Start Part</TaskTitle>
                  <Fold aria-label="Collapse"><svg width="5" height="6" viewBox="0 0 5 6"><path d="M.5 2.8 2.5 .8 4.5 2.8M.5 5.5 2.5 3.5 4.5 5.5" fill="none" stroke="#222" strokeWidth=".9" /></svg></Fold>
                </TaskHead>
                <TaskBody><TaskLink href="#"><Icon name="body" size={9} />Create body</TaskLink></TaskBody>
              </TaskCard>
            </TaskArea>
          </Dock>
          <Dock $grow>
            <DockBar title="FCInfo rmu (1.28) (2023/09/01)" />
            <Info />
          </Dock>
        </Right>
      </Work>
      <Status>
        <StatusBtn $w={58} $pl={9}><Icon name="mouse" size={10} />Blender<Caret /></StatusBtn>
        <StatusBtn $w={83} $pl={11}>9.14 in x 7.17 in<Caret /></StatusBtn>
      </Status>
    </Window>
  );
}
